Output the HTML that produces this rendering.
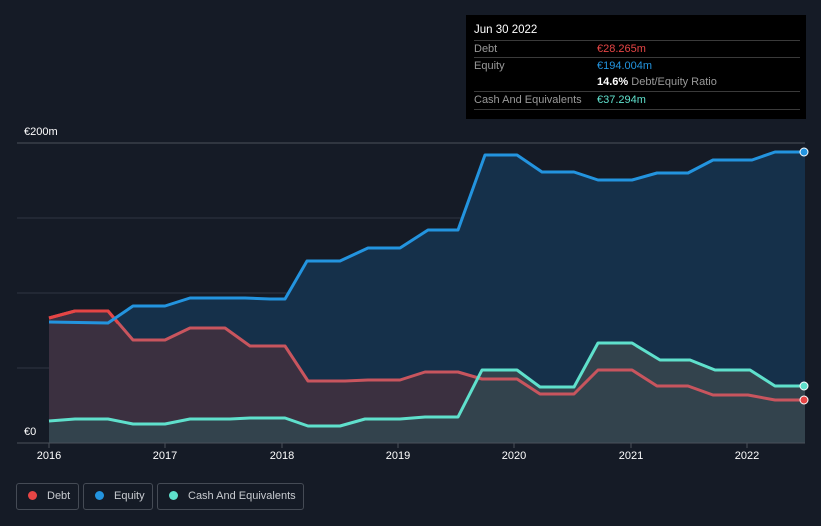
<!DOCTYPE html>
<html><head><style>
html,body{margin:0;width:821px;height:526px;background:#151b26;font-family:"Liberation Sans",sans-serif;overflow:hidden;position:relative}
.tt{position:absolute;left:466px;top:15px;width:340px;height:104px;background:#000;color:#fff;font-size:11px}
.row{position:absolute;left:8px;width:326px;border-top:1px solid #3a3a3a;height:17px;line-height:17px}
.lab{color:#999}
.leg{position:absolute;top:483px;height:27px;border:1px solid #454b55;border-radius:3px;color:#c8cbd0;font-size:11px;line-height:25px;box-sizing:border-box;white-space:nowrap}
.leg i{display:inline-block;width:9px;height:9px;border-radius:50%;margin:0 10px 0 11px;vertical-align:-1px}
.yr{position:absolute;top:450px;color:#fff;font-size:11px;width:40px;text-align:center}
</style></head><body>
<svg width="821" height="526" style="position:absolute;left:0;top:0">
<g stroke="#2f3641" stroke-width="1">
<line x1="17" y1="143" x2="805" y2="143" stroke="#4a505a"/><line x1="17" y1="218" x2="805" y2="218"/><line x1="17" y1="293" x2="805" y2="293"/><line x1="17" y1="368" x2="805" y2="368"/>
</g>
<polygon fill="#15304a" points="49,322 108,323 133,306 165,306 190,298 245,298 270,299 285,299 307,261 340,261 368,248 400,248 428,230 458,230 485,155 517,155 542,172 574,172 598,180 632,180 657,173 688,173 713,160 752,160 775,152 805,152 805,443 49,443"/>
<polygon fill="#3b3040" points="49,318 75,311 108,311 133,340 165,340 190,328 225,328 250,346 285,346 308,381 345,381 368,380 400,380 425,372 458,372 482,379 517,379 540,394 574,394 598,370 632,370 657,386 688,386 713,395 748,395 775,400 805,400 805,443 49,443"/>
<polygon fill="#33434d" points="49,421 75,419 108,419 133,424 165,424 190,419 230,419 250,418 285,418 308,426 340,426 365,419 400,419 425,417 458,417 482,370 517,370 540,387 574,387 598,343 632,343 660,360 690,360 715,370 750,370 775,386 805,386 805,443 49,443"/>
<line x1="17" y1="443" x2="805" y2="443" stroke="#4a505a"/>
<g stroke="#4a505a"><line x1="49" y1="443" x2="49" y2="448"/><line x1="165" y1="443" x2="165" y2="448"/><line x1="282" y1="443" x2="282" y2="448"/><line x1="398" y1="443" x2="398" y2="448"/><line x1="514" y1="443" x2="514" y2="448"/><line x1="631" y1="443" x2="631" y2="448"/><line x1="747" y1="443" x2="747" y2="448"/></g>
<g fill="none" stroke-width="3" stroke-linejoin="round">
<polyline stroke="#c8555e" points="49,318 75,311 108,311 133,340 165,340 190,328 225,328 250,346 285,346 308,381 345,381 368,380 400,380 425,372 458,372 482,379 517,379 540,394 574,394 598,370 632,370 657,386 688,386 713,395 748,395 775,400 805,400"/>
<polyline stroke="#e64545" points="49,318 75,311 108,311 118,323"/>
<polyline stroke="#5fe0cc" points="49,421 75,419 108,419 133,424 165,424 190,419 230,419 250,418 285,418 308,426 340,426 365,419 400,419 425,417 458,417 482,370 517,370 540,387 574,387 598,343 632,343 660,360 690,360 715,370 750,370 775,386 805,386"/>
<polyline stroke="#2394df" points="49,322 108,323 133,306 165,306 190,298 245,298 270,299 285,299 307,261 340,261 368,248 400,248 428,230 458,230 485,155 517,155 542,172 574,172 598,180 632,180 657,173 688,173 713,160 752,160 775,152 805,152"/>
</g>
<circle cx="804" cy="152" r="4" fill="#2394df" stroke="#fff" stroke-width="1"/>
<circle cx="804" cy="400" r="4" fill="#e64545" stroke="#fff" stroke-width="1"/>
<circle cx="804" cy="386" r="4" fill="#5fe0cc" stroke="#fff" stroke-width="1"/>
<text x="24" y="135" fill="#fff" font-size="11" font-family="Liberation Sans">€200m</text>
<text x="24" y="435" fill="#fff" font-size="11" font-family="Liberation Sans">€0</text>
</svg>
<div class="yr" style="left:29px">2016</div><div class="yr" style="left:145px">2017</div><div class="yr" style="left:262px">2018</div><div class="yr" style="left:378px">2019</div><div class="yr" style="left:494px">2020</div><div class="yr" style="left:611px">2021</div><div class="yr" style="left:727px">2022</div>
<div class="tt">
<div style="position:absolute;left:8px;top:9px;font-size:11.5px">Jun 30 2022</div>
<div class="row" style="top:25px"><span class="lab">Debt</span><span style="position:absolute;left:123px;color:#e64545">€28.265m</span></div>
<div class="row" style="top:42px"><span class="lab">Equity</span><span style="position:absolute;left:123px;color:#2394df">€194.004m</span></div>
<div class="row" style="top:59px;border:0"><span style="position:absolute;left:123px"><b>14.6%</b> <span class="lab">Debt/Equity Ratio</span></span></div>
<div class="row" style="top:76px"><span class="lab">Cash And Equivalents</span><span style="position:absolute;left:123px;color:#5fe0cc">€37.294m</span></div>
<div class="row" style="top:94px;height:0"></div>
</div>
<div class="leg" style="left:16px;width:63px"><i style="background:#e64545"></i>Debt</div>
<div class="leg" style="left:83px;width:70px"><i style="background:#2394df"></i>Equity</div>
<div class="leg" style="left:157px;width:147px"><i style="background:#5fe0cc"></i>Cash And Equivalents</div>
</body></html>
